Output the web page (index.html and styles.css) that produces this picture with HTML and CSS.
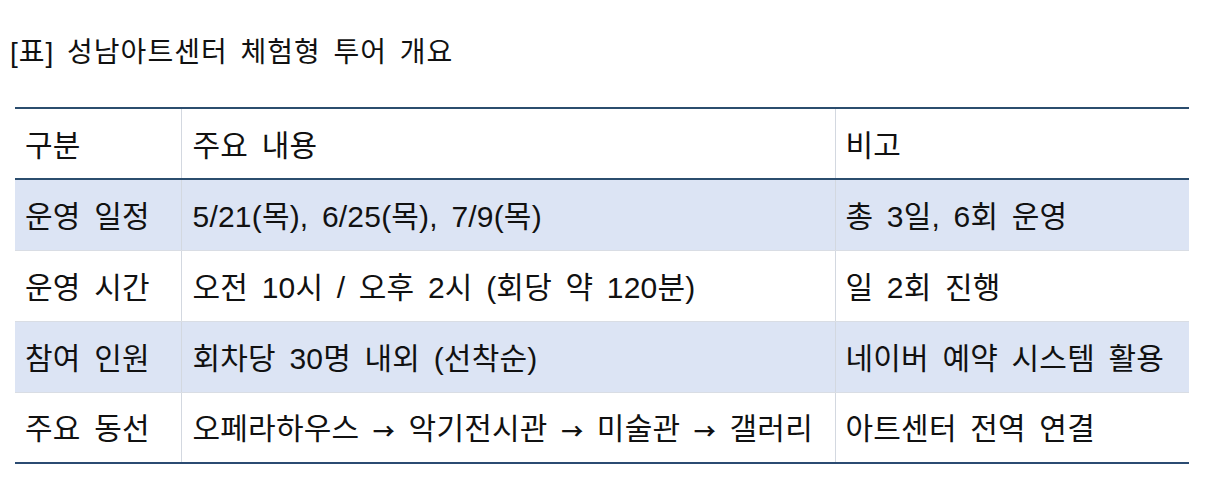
FILE: index.html
```html
<!DOCTYPE html>
<html lang="ko">
<head>
<meta charset="utf-8">
<link rel="stylesheet" href="styles.css">
</head>
<body>
<div class="page">
  <h1 class="title">[표] 성남아트센터 체험형 투어 개요</h1>
  <table class="tour">
    <colgroup>
      <col class="c1"><col class="c2"><col class="c3">
    </colgroup>
    <thead>
      <tr><th>구분</th><th>주요 내용</th><th>비고</th></tr>
    </thead>
    <tbody>
      <tr class="alt"><td>운영 일정</td><td>5/21(목), 6/25(목), 7/9(목)</td><td>총 3일, 6회 운영</td></tr>
      <tr><td>운영 시간</td><td>오전 10시 / 오후 2시 (회당 약 120분)</td><td>일 2회 진행</td></tr>
      <tr class="alt"><td>참여 인원</td><td>회차당 30명 내외 (선착순)</td><td>네이버 예약 시스템 활용</td></tr>
      <tr><td>주요 동선</td><td>오페라하우스 <span class="arrow">→</span> 악기전시관 <span class="arrow">→</span> 미술관 <span class="arrow">→</span> 갤러리</td><td>아트센터 전역 연결</td></tr>
    </tbody>
  </table>
</div>
</body>
</html>
```
FILE: styles.css
```css
html, body {
  margin: 0;
  padding: 0;
  background: #ffffff;
}
.page {
  padding: 30px 20px 0 15px;
  font-family: "Liberation Sans", "Noto Sans CJK KR", sans-serif;
  color: #111111;
}
.title {
  margin: 0 0 0 -5px;
  font-size: 28px;
  font-weight: normal;
  line-height: 46px;
  letter-spacing: 1px;
  word-spacing: 4px;
}
.tour {
  margin-top: 31px;
  width: 1174px;
  border-collapse: collapse;
  font-size: 30px;
  letter-spacing: 0.2px;
  word-spacing: 5px;
}
.c1 { width: 166px; }
.c2 { width: 654px; }
.c3 { width: 354px; }
.tour th, .tour td {
  text-align: left;
  font-weight: normal;
  height: 71px;
  padding: 0 0 2px 10px;
  border-left: 1px solid #d3d8e0;
  border-bottom: 1px solid #d9dde4;
  box-sizing: border-box;
  white-space: nowrap;
}
.tour th:first-child, .tour td:first-child { border-left: none; }
.tour th:nth-child(2), .tour td:nth-child(2) { padding-left: 11px; }
.tour thead tr { border-top: 2px solid #2b4d6e; border-bottom: 2px solid #2b4d6e; }
.tour thead th { border-bottom: 2px solid #2b4d6e; }
.tour tbody tr:last-child td { border-bottom: 2px solid #2b4b72; }
.tour tr.alt td { background: #dce4f4; }
.arrow {
  font-family: "Noto Sans CJK KR", sans-serif;
  font-size: 22px;
  font-weight: bold;
}
```
